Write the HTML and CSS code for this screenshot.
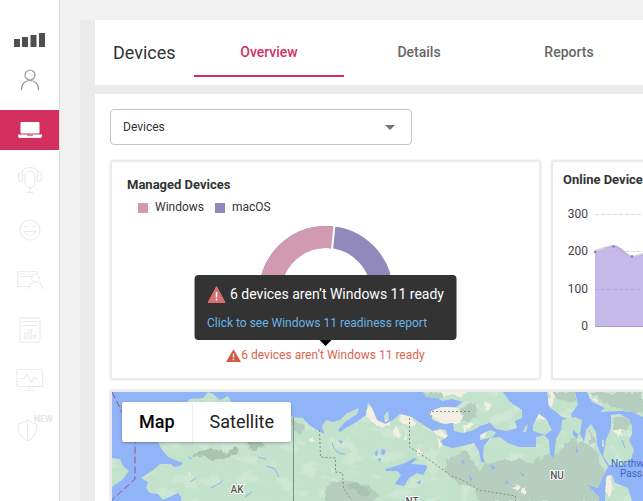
FILE: index.html
```html
<!DOCTYPE html>
<html lang="en">
<head>
<meta charset="utf-8">
<title>Devices</title>
<link rel="stylesheet" href="styles.css">
</head>
<body>
<nav class="sidebar" aria-label="Main">
  <a class="side-item" href="#" aria-label="Home">
    <svg width="32" height="16" viewBox="0 0 32 16" fill="#4f4f4f"><path d="M0 7h6v8H0zM8 5h6v10H8zM16.500 3h6v12h-6zM25 1h6v14h-6z"/></svg>
  </a>
  <a class="side-item" href="#" aria-label="Account">
    <svg width="20" height="22" viewBox="0 0 20 22" fill="none" stroke="#9698a6" stroke-width="1.200"><circle cx="10" cy="6" r="5"/><path d="M1.300 21.200C1.300 15 5 11.500 10 11.500s8.700 3.500 8.700 9.700"/></svg>
  </a>
  <a class="side-item side-active" href="#" aria-label="Devices" aria-current="page">
    <svg width="24" height="18" viewBox="0 0 24 18"><rect x="2.500" y="1" width="19" height="11.500" rx="1" fill="#fff"/><path d="M0 13.500h24v1.500q0 2-2 2H2q-2 0-2-2z" fill="#fff"/><path d="M9 13.500h6v1.600H9z" fill="#d22f5f" opacity=".6"/></svg>
  </a>
  <a class="side-item side-faint" href="#" aria-label="Support">
    <svg width="24" height="26" viewBox="0 0 24 26"><rect x="7" y="4" width="10" height="16.500" rx="4.500"/><path d="M3.500 6C5 2.500 8 .7 12 .7s7 1.800 8.500 5.300M12 20.500v4.500M8.500 25.300h7"/><rect x=".7" y="5" width="4" height="9.500" rx="2"/><rect x="19.300" y="5" width="4" height="9.500" rx="2"/></svg>
  </a>
  <a class="side-item side-faint" href="#" aria-label="Satisfaction">
    <svg width="22" height="22" viewBox="0 0 22 22"><circle cx="11" cy="11" r="10"/><path d="M5 8.500q2-2.500 4 0M13 8.500q2-2.500 4 0M5 12.500q6 7.500 12 0z"/></svg>
  </a>
  <a class="side-item side-faint" href="#" aria-label="Customers">
    <svg width="26" height="20" viewBox="0 0 26 20"><path d="M14 16.500H.7V1.500h19V4M.7 6.500H15M2.500 4h5"/><circle cx="18.500" cy="8" r="3.800"/><path d="M12 19c0-4.500 2.500-7 6.500-7s6.800 2.500 6.800 7"/></svg>
  </a>
  <a class="side-item side-faint" href="#" aria-label="Reports">
    <svg width="22" height="26" viewBox="0 0 22 26"><rect x="1" y=".8" width="20" height="24.500" rx="1.500"/><path d="M3.500 4.500h15M3.500 8.500h15M5.500 16h2.300v5.500H5.500zM10 12.500h2.300v9H10zM14.500 18.500h2.300v3h-2.300z"/></svg>
  </a>
  <a class="side-item side-faint" href="#" aria-label="Monitoring">
    <svg width="28" height="24" viewBox="0 0 28 24"><rect x="1" y="1.500" width="25.500" height="17" rx="1"/><path d="M2 10.500h6l3-4 4 8 3-5 1.500 1h3M13.700 18.500v4M10.500 22.500h7"/></svg>
  </a>
  <a class="side-item side-faint" href="#" aria-label="Security">
    <svg width="22" height="24" viewBox="0 0 22 24"><path d="M10.500 1.500Q6 5.500 1 6q-.5 11.500 9.500 17.300Q20.500 17.500 20 6q-5-.5-9.500-4.500zM10.500 1.500v21.500"/></svg>
    <span class="side-badge">NEW</span>
  </a>
</nav>

<main class="main">
  <header class="topbar">
    <h1 class="page-title">Devices</h1>
    <nav class="tabs" aria-label="Views">
      <a class="tab tab-active" href="#" aria-current="page">Overview</a>
      <a class="tab" href="#">Details</a>
      <a class="tab" href="#">Reports</a>
    </nav>
  </header>

  <div class="content">
    <div class="picker">
      <select class="picker-select" aria-label="Device group"><option>Devices</option></select>
    </div>

    <div class="cards">
      <section class="card managed">
        <h2 class="card-title">Managed Devices</h2>
        <div class="legend">
          <span class="key"><i class="swatch swatch-windows"></i>Windows</span>
          <span class="key"><i class="swatch swatch-mac"></i>macOS</span>
        </div>
        <svg class="donut" width="134" height="120" viewBox="0 0 134 120" fill="none" stroke-width="22">
          <path d="M11 67A56 56 0 0 1 123 67" stroke="#9188bb"/>
          <path d="M11 67A56 56 0 0 1 73.500 11.400" stroke="#d19ab0"/>
          <path d="M75.500-1L73 24" stroke="#fff" stroke-width="2"/>
        </svg>
        <div class="note">
          <svg width="15" height="13" viewBox="0 0 15 13"><path d="M7.500.3L15 13H0z" fill="#d4573f"/><path d="M7.500 4.500v4M7.500 9.800v1.500" stroke="#fff" stroke-width="1.400"/></svg>
          <span>6 devices aren’t Windows 11 ready</span>
          <div class="tooltip" role="tooltip">
            <p class="tooltip-title">
              <svg width="18" height="17" viewBox="0 0 18 17"><path d="M9 .5L17.500 16.500H.5z" fill="#d77072" stroke="#d77072" stroke-linejoin="round"/><path d="M9 6v5.500M9 12.800v1.700" stroke="#fff" stroke-width="1.500"/></svg>
              6 devices aren’t Windows 11 ready
            </p>
            <a class="tooltip-link" href="#">Click to see Windows 11 readiness report</a>
          </div>
        </div>
      </section>

      <section class="card online">
        <h2 class="card-title">Online Devices</h2>
        <svg class="area" width="420" height="150" viewBox="0 0 420 150">
          <g stroke="#dedede" stroke-dasharray="4 2"><path d="M42 24.500H420M42 61.500H420M42 99.500H420"/></g>
          <path d="M42 62C49 61 53 57 60.500 56S73 66 79 67S92 63 98 61S120 58 135 62S170 68 200 60S300 66 420 60V136H42z" fill="#b7a6e5" fill-opacity=".8"/>
          <path d="M42 61C49 60 53 56 60.500 56S73 66 79 66.500S92 63 98 60" fill="none" stroke="#a9a3b8" stroke-opacity=".55" stroke-width="2"/>
          <g fill="#9280bd"><circle cx="42" cy="62" r="1.300"/><circle cx="60.500" cy="56.500" r="1.300"/><circle cx="79" cy="66.500" r="1.300"/></g>
          <path d="M42 99.500H420" stroke="#b5a7dc" stroke-dasharray="4 2"/>
          <path d="M42 136.500H420" stroke="#a59bbb"/>
          <g class="axis"><text x="35" y="28">300</text><text x="35" y="65">200</text><text x="35" y="103">100</text><text x="35" y="140">0</text></g>
        </svg>
      </section>
    </div>

    <section class="map" aria-label="Device map">
      <svg class="map-art" width="531" height="109" viewBox="112 392 531 109">
        <defs>
          <clipPath id="land">
            <path d="M155 436L162 450L168 457L175 460L183 463L180 466L174 467L171 464L160 464L152 471L141 478L148 482L146 488L150 493L158 494L163 500L178 493L181 497L182 510H600L599 497L586 484L598 488L603 476L608 467L600 452L597 445L596 432L591 424L586 430L584 442L580 434L582 420L575 417L562 420L561 430L556 439L554 458L550 455L549 440L544 435L536 437L536 447L519 447L508 443L500 437L490 438L484 446L483 456L485 463L481 462L479 451L474 443L463 446L452 448L443 445L441 441L448 436L446 430L440 429L433 431L425 426L412 417L400 414L393 420L385 424L377 420L372 408L368 402L366 415L358 421L346 428L340 432L338 430L345 422L357 414L359 408L347 413L340 420L333 422L326 420L322 426L324 434L317 430L309 425L303 418L293 417L285 410L270 405L232 403L228 396L220 400L213 394L208 392L203 398L190 399L185 404V436z"/>
            <path d="M112 458L120 459L123 466L129 471L122 480L112 487zM423 392L426 397L438 398L442 401L452 399L463 402L456 407L441 407L429 412L433 420L443 424L453 423L454 431L463 433L474 430L480 426L490 423L496 429L506 431L517 428L515 421L522 418L522 410L510 402L503 392z"/>
            <path d="M480 435L490 430L496 432L493 437L480 440zM525 427L528 424L526 432L523 432zM533 425L539 414L546 419L552 430L545 435L533 431zM547 392H575L578 405L571 414L572 420L562 417L556 412L549 407zM587 392L592 402L605 408L600 412L621 411L632 412L643 417V392zM606 476L612 475L615 483L628 488L632 501H605zM384 416L388 411L389 420L385 422zM602 440L604 440L604 447L602 447z"/>
            <path d="M611 415L620 414L629 419L632 426L632 434L629 440L634 450L631 459L624 466L609 465L603 456L606 440L611 428z"/>
          </clipPath>
          <filter id="grain" x="0" y="0" width="100%" height="100%">
            <feTurbulence type="fractalNoise" baseFrequency=".05 .08" numOctaves="3" seed="8"/>
            <feColorMatrix values="0 0 0 0 .68 0 0 0 0 .83 0 0 0 0 .72 9 0 0 0 -4.900"/>
          </filter>
          <filter id="rough" x="-10%" y="-10%" width="120%" height="120%">
            <feTurbulence type="fractalNoise" baseFrequency=".12" numOctaves="3" seed="4"/>
            <feDisplacementMap in="SourceGraphic" scale="8" xChannelSelector="R" yChannelSelector="G"/>
          </filter>
        </defs>
        <path fill="#91b3f7" d="M112 392h531v109H112z"/>
        <g clip-path="url(#land)">
          <path fill="#c3e2cb" d="M112 392h531v109H112z"/>
          <path filter="url(#grain)" opacity=".5" d="M112 392h531v109H112z"/>
          <g filter="url(#rough)">
            <g fill="#b6cebf">
              <path d="M485 463L510 460L535 462L546 455L558 452L570 440L581 441L595 450L604 470L608 478L600 501H478L474 484zM548 392H575L577 402L560 400zM587 392H643V414L610 406zM446 460L466 450L480 470L478 486L458 484L444 470zM463 405L470 400V423L460 420zM611 418L630 418L628 430L614 430zM590 430L596 440L590 446z"/>
              <path d="M470 400l8 4-2 14-10 4zM423 392h34l-8 5h-20zM325 485l20-6 20 6 16 10-10 8h-45zM292 420l12 6-2 12-10-8z"/>
            </g>
            <g fill="#a9c3b0"><path d="M192 456l16-8 18 4 10-6 2 8-18 6-14-2zM345 486l12-4 14 10-8 4zM246 440l14 2 6 6-16 2z"/></g>
            <g fill="#f4efe3">
              <path d="M429 411l12-4 18 1 6 6-8 9-16 0-9-4zM368 402l5 11 8 9 12-2-5 7-14-3-8-6zM400 413l8 2 8 8-2 4-12-4zM433 430l8 0 12 7-4 3-10-3zM440 392h28l-6 5h-18zM547 392l5 0 1 18-4-6zM606 476l7 0-1 18-6 4zM587 392l14 11-6-1zM486 400l5 6-3 3-4-5z"/>
              <path d="M396 427l4 6-3 5-3-6zM405 430l2 8-3 1zM417 448l6 4-2 5-5-5zM536 418l4-5 6 8-5-2zM511 487l5-3 5 4-4 2zM521 490l5-2-1 6-4 0zM309 440l4-2 2 5-3 0zM330 466l3 1-1 6zM439 440l4 5-4 4zM613 429l10 1-2 7-4-2zM480 434l8-2-2 5-7 2zM463 426l10-3-2 7-8 2zM188 473l3 0-1 4z"/>
            </g>
          </g>
        </g>
        <g fill="#91b3f7">
          <path d="M385 469L396 466L405 463L414 458L417 459L411 464L426 465L427 468L423 475L417 473L409 478L404 486L395 484L401 475L397 471L386 471zM376 450l2 1-1 5-2-1zM382 449l4 1-2 5-3-1zM378 458l4 1-3 3zM416 483l5-3-1 4zM338 440l5 1-2 3z"/>
          <path d="M576 446l2 6-2 1zM573 430l5 4-1 5-4-4zM526 437l5 1-1 4-4-1zM469 475l4 4-3 2zM490 464l6 4-4 2zM506 480l3 3-4 1zM520 472l5 3-3 1zM462 459l3 4-3 1z"/>
        </g>
        <g fill="none" stroke="#91b3f7"><path d="M211 488l9-5 3-3M267 466l8 3 4 8M332 443q3 12 13 11M190 482l6-4M245 497l7-5M188 457l4 2M258 457l8 2M550 438l3 10M622 440l3 8"/></g>
        <g fill="none">
          <path d="M112 392l23 46v41l-23 21" stroke="#9b5472" stroke-dasharray="7 3"/>
          <path d="M293.500 417v84" stroke="#72977e"/>
          <g stroke="#7d9184" stroke-dasharray="2 2"><path d="M319.500 430l1 27 15 1v14l7 1 1 15 8 12M409.500 418v29l20 13 22 16 11 4 16 10 37 6v6M470 411.500h-40l2 6"/></g>
        </g>
        <g class="map-label"><text x="237" y="493">AK</text><text x="412" y="505">NT</text><text x="557" y="479">NU</text></g>
        <g class="water-label"><text x="611" y="467">Northwestern</text><text x="620" y="477">Passages</text></g>
      </svg>
      <div class="map-toggle">
        <button class="map-button map-button-on" type="button">Map</button>
        <button class="map-button" type="button">Satellite</button>
      </div>
    </section>
  </div>
</main>
</body>
</html>
```

FILE: styles.css
```css
* { box-sizing: border-box; }

body {
  margin: 0;
  display: flex;
  height: 100vh;
  overflow: hidden;
  background: #f1f1f1;
  color: #333;
  font: 12px/18px Roboto, sans-serif;
}

h1, h2, p { margin: 0; }
a { text-decoration: none; color: inherit; }

.sidebar {
  flex: none;
  width: 60px;
  padding-top: 20px;
  background: #fff;
  border-right: 1px solid #dcdcdc;
}

.side-item {
  position: relative;
  display: flex;
  align-items: center;
  justify-content: center;
  height: 40px;
  margin-bottom: 10px;
}
.side-item:first-child { margin-bottom: 0; }
.side-active { background: #d22f5f; }
.side-faint svg { fill: none; stroke: #ececee; stroke-width: 1.2; }
.side-item:last-child { padding-right: 3px; }

.side-badge {
  position: absolute;
  top: 1px;
  right: 6px;
  color: #e6e6ea;
  font-size: 9px;
  font-weight: 700;
  line-height: 16px;
}

.main {
  flex: 1;
  min-width: 0;
  display: flex;
  flex-direction: column;
  gap: 9px;
  margin: 20px 0 0 20px;
  padding-left: 15px;
  background: #ebebeb;
  overflow: hidden;
}

.topbar {
  flex: none;
  display: flex;
  height: 65px;
  background: #fff;
}
.page-title {
  flex: none;
  width: 99px;
  padding-left: 18px;
  font-size: 18px;
  font-weight: 400;
  line-height: 65px;
}
.tabs { display: flex; }
.tab {
  flex: none;
  width: 150px;
  height: 57px;
  padding-top: 8px;
  border-bottom: 2px solid transparent;
  color: #666;
  font-size: 14px;
  font-weight: 500;
  line-height: 48px;
  text-align: center;
}
.tab-active { color: #d22f5f; border-color: #d22f5f; }

.content {
  flex: 1;
  min-height: 0;
  display: flex;
  flex-direction: column;
  padding: 15px 0 0 15px;
  background: #fff;
}

.picker {
  position: relative;
  flex: none;
  width: 302px;
}
.picker-select {
  display: block;
  width: 100%;
  height: 36px;
  padding: 0 12px;
  appearance: none;
  background: #fff;
  border: 1px solid #c6c6c6;
  border-radius: 4px;
  color: #333;
  font: inherit;
}
.picker::after {
  content: "";
  position: absolute;
  top: 16px;
  right: 17px;
  border: 5px solid transparent;
  border-top-color: #757575;
  border-bottom: 0;
  pointer-events: none;
}

.cards {
  flex: none;
  display: grid;
  grid-template-columns: repeat(2, minmax(431px, 1fr));
  gap: 10px;
  margin-top: 15px;
}
.card {
  border: 2px solid #ebebeb;
  border-radius: 3px;
  box-shadow: 0 0 2px #ddd;
}
.managed { padding: 13px 15px 14px; }
.online { padding: 8px 0 0; }
.card-title {
  font-size: 13px;
  font-weight: 700;
  line-height: 20px;
}
.online .card-title { padding-left: 10px; }

.legend {
  display: flex;
  gap: 11px;
  margin: 3px 0 10px 11px;
}
.key { display: flex; align-items: center; gap: 7px; }
.swatch { width: 10px; height: 10px; margin-top: 1px; }
.swatch-windows { background: #d19ab0; }
.swatch-mac { background: #9188bb; }
.donut { display: block; margin: 0 auto; }

.note {
  position: relative;
  display: flex;
  align-items: center;
  justify-content: center;
  color: #d7644f;
}
.tooltip {
  position: absolute;
  bottom: calc(100% + 6px);
  left: 50%;
  width: max-content;
  height: 65px;
  padding: 10px 13px;
  transform: translateX(-50%);
  background: #333;
  border-radius: 4px;
  color: #fff;
}
.tooltip::after {
  content: "";
  position: absolute;
  top: 100%;
  left: 50%;
  margin-left: -6px;
  border: 6px solid transparent;
  border-top-color: #000;
  border-bottom: 0;
}
.tooltip-title {
  display: flex;
  align-items: center;
  gap: 5px;
  margin-bottom: 11px;
  font-size: 14px;
}
.tooltip-link { display: block; color: #68b5e8; }

.area { display: block; }
.axis { fill: #444; font-size: 12px; text-anchor: end; }

.map {
  position: relative;
  flex: 1;
  min-height: 0;
  margin-top: 10px;
  background: #91b3f7;
  border: 2px solid #ebebeb;
  border-width: 2px 0 0 2px;
  box-shadow: 0 0 2px #ddd;
  overflow: hidden;
}
.map-art { display: block; }
.map-label {
  fill: #555;
  stroke: #fff;
  stroke-width: 2px;
  paint-order: stroke;
  font-size: 10px;
  font-weight: 500;
  text-anchor: middle;
}
.water-label { fill: #3f68c8; font-size: 10px; }

.map-toggle {
  position: absolute;
  top: 10px;
  left: 10px;
  display: flex;
  background: #fff;
  border-radius: 2px;
  box-shadow: 0 1px 3px rgba(0, 0, 0, .3);
}
.map-button {
  height: 40px;
  padding: 0 17px;
  background: none;
  border: 0;
  color: #222;
  font: 18px/40px Roboto, sans-serif;
}
.map-button-on {
  border-right: 1px solid #eee;
  color: #000;
  font-weight: 500;
}
```
